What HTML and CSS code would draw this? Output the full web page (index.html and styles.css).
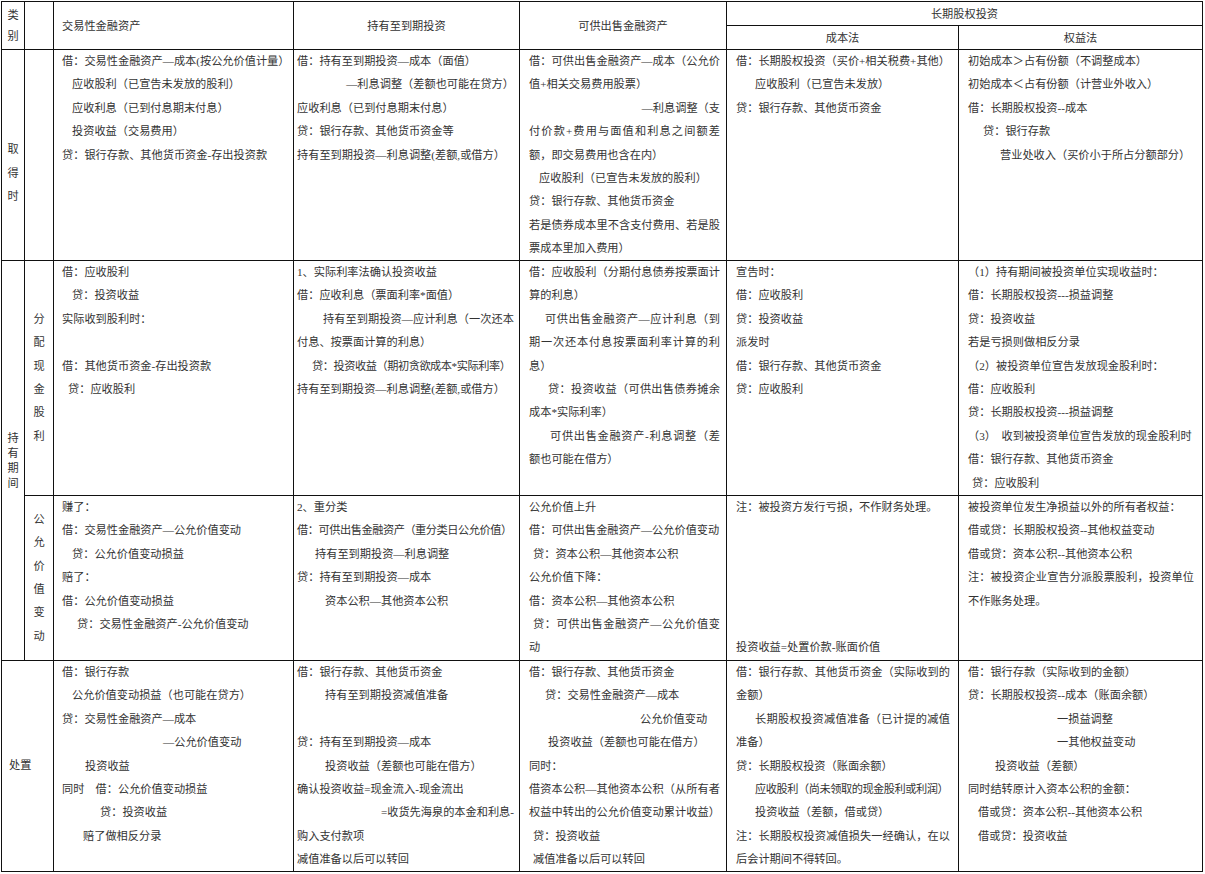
FILE: index.html
```html
<!DOCTYPE html>
<html lang="zh-CN">
<head>
<meta charset="utf-8">
<title>金融资产与长期股权投资会计处理</title>
<link rel="stylesheet" href="styles.css">
</head>
<body>
<div class="sheet">
  <!-- header -->
  <div class="cell hd rs2"><span class="stack st-kind">类别</span></div>
  <div class="cell rs2"></div>
  <div class="cell hd hd-left rs2">交易性金融资产</div>
  <div class="cell hd rs2">持有至到期投资</div>
  <div class="cell hd rs2">可供出售金融资产</div>
  <div class="cell hd cs2">长期股权投资</div>
  <div class="cell hd">成本法</div>
  <div class="cell hd">权益法</div>

  <!-- 取得时 -->
  <div class="cell side side-get"><span class="stack">取得时</span></div>
  <div class="cell"></div>
  <div class="cell k3">
    <p>借：交易性金融资产—成本(按公允价值计量）</p>
    <p class="p10">应收股利（已宣告未发放的股利）</p>
    <p class="p10">应收利息（已到付息期末付息）</p>
    <p class="p10">投资收益（交易费用）</p>
    <p>贷：银行存款、其他货币资金-存出投资款</p>
  </div>
  <div class="cell k4">
    <p>借：持有至到期投资—成本（面值）</p>
    <p class="r">—利息调整（差额也可能在贷方）</p>
    <p>应收利息（已到付息期末付息）</p>
    <p>贷：银行存款、其他货币资金等</p>
    <p>持有至到期投资—利息调整(差额,或借方）</p>
  </div>
  <div class="cell k5">
    <p class="j">借：可供出售金融资产—成本（公允价</p>
    <p>值+相关交易费用股票）</p>
    <p class="r">—利息调整（支</p>
    <p class="j">付价款+费用与面值和利息之间额差</p>
    <p>额，即交易费用也含在内）</p>
    <p class="p10">应收股利（已宣告未发放的股利）</p>
    <p>贷：银行存款、其他货币资金</p>
    <p class="j">若是债券成本里不含支付费用、若是股</p>
    <p>票成本里加入费用）</p>
  </div>
  <div class="cell k6">
    <p>借：长期股权投资（买价+相关税费+其他）</p>
    <p class="p19">应收股利（已宣告未发放）</p>
    <p>贷：银行存款、其他货币资金</p>
  </div>
  <div class="cell k7">
    <p>初始成本＞占有份额（不调整成本）</p>
    <p>初始成本＜占有份额（计营业外收入）</p>
    <p>借：长期股权投资--成本</p>
    <p class="p15">贷：银行存款</p>
    <p class="p32">营业处收入（买价小于所占分额部分）</p>
  </div>

  <!-- 持有期间 -->
  <div class="cell side rs2"><span class="stack st-hold">持有期间</span></div>
  <div class="cell side"><span class="stack">分配现金股利</span></div>
  <div class="cell k3">
    <p>借：应收股利</p>
    <p class="p10">贷：投资收益</p>
    <p>实际收到股利时：</p>
    <p class="blank"></p>
    <p>借：其他货币资金-存出投资款</p>
    <p class="p6">贷：应收股利</p>
  </div>
  <div class="cell k4">
    <p>1、实际利率法确认投资收益</p>
    <p>借：应收利息（票面利率*面值）</p>
    <p class="p26 j">持有至到期投资—应计利息（一次还本</p>
    <p>付息、按票面计算的利息）</p>
    <p class="p15 tight">贷：投资收益（期初贪欲成本*实际利率）</p>
    <p>持有至到期投资—利息调整(差额,或借方）</p>
  </div>
  <div class="cell k5">
    <p class="j">借：应收股利（分期付息债券按票面计</p>
    <p>算的利息）</p>
    <p class="p16 j">可供出售金融资产—应计利息（到</p>
    <p class="j">期一次还本付息按票面利率计算的利</p>
    <p>息）</p>
    <p class="p19 j">贷：投资收益（可供出售债券摊余</p>
    <p>成本*实际利率）</p>
    <p class="p21 j">可供出售金融资产-利息调整（差</p>
    <p>额也可能在借方）</p>
  </div>
  <div class="cell k6">
    <p>宣告时：</p>
    <p>借：应收股利</p>
    <p>贷：投资收益</p>
    <p>派发时</p>
    <p>借：银行存款、其他货币资金</p>
    <p>贷：应收股利</p>
  </div>
  <div class="cell k7">
    <p>（1）持有期间被投资单位实现收益时：</p>
    <p>借：长期股权投资---损益调整</p>
    <p>贷：投资收益</p>
    <p>若是亏损则做相反分录</p>
    <p>（2）被投资单位宣告发放现金股利时：</p>
    <p>借：应收股利</p>
    <p>贷：长期股权投资---损益调整</p>
    <p>（3）　收到被投资单位宣告发放的现金股利时</p>
    <p>借：银行存款、其他货币资金</p>
    <p class="p4">贷：应收股利</p>
  </div>

  <div class="cell side"><span class="stack">公允价值变动</span></div>
  <div class="cell k3">
    <p>赚了：</p>
    <p>借：交易性金融资产—公允价值变动</p>
    <p class="p10">贷：公允价值变动损益</p>
    <p>赔了：</p>
    <p>借：公允价值变动损益</p>
    <p class="p15">贷：交易性金融资产-公允价值变动</p>
  </div>
  <div class="cell k4">
    <p>2、重分类</p>
    <p class="tight">借：可供出售金融资产（重分类日公允价值）</p>
    <p class="p18">持有至到期投资—利息调整</p>
    <p>贷：持有至到期投资—成本</p>
    <p class="p28">资本公积—其他资本公积</p>
  </div>
  <div class="cell k5">
    <p>公允价值上升</p>
    <p>借：可供出售金融资产—公允价值变动</p>
    <p class="p4">贷：资本公积—其他资本公积</p>
    <p>公允价值下降：</p>
    <p>借：资本公积—其他资本公积</p>
    <p class="p4 j">贷：可供出售金融资产—公允价值变</p>
    <p>动</p>
  </div>
  <div class="cell k6">
    <p>注：被投资方发行亏损，不作财务处理。</p>
    <p class="blank"></p>
    <p class="blank"></p>
    <p class="blank"></p>
    <p class="blank"></p>
    <p class="blank"></p>
    <p>投资收益=处置价款-账面价值</p>
  </div>
  <div class="cell k7">
    <p>被投资单位发生净损益以外的所有者权益：</p>
    <p>借或贷：长期股权投资--其他权益变动</p>
    <p>借或贷：资本公积--其他资本公积</p>
    <p class="j">注：被投资企业宣告分派股票股利，投资单位</p>
    <p>不作账务处理。</p>
  </div>

  <!-- 处置 -->
  <div class="cell label-row cs2">处置</div>
  <div class="cell k3">
    <p>借：银行存款</p>
    <p class="p10">公允价值变动损益（也可能在贷方）</p>
    <p>贷：交易性金融资产—成本</p>
    <p class="p101">—公允价值变动</p>
    <p class="p23">投资收益</p>
    <p>同时　借：公允价值变动损益</p>
    <p class="p38">贷：投资收益</p>
    <p class="p21">赔了做相反分录</p>
  </div>
  <div class="cell k4">
    <p>借：银行存款、其他货币资金</p>
    <p class="p28">持有至到期投资减值准备</p>
    <p class="blank"></p>
    <p>贷：持有至到期投资—成本</p>
    <p class="p28">投资收益（差额也可能在借方）</p>
    <p>确认投资收益=现金流入-现金流出</p>
    <p class="r">=收货先海泉的本金和利息-</p>
    <p>购入支付款项</p>
    <p>减值准备以后可以转回</p>
  </div>
  <div class="cell k5">
    <p>借：银行存款、其他货币资金</p>
    <p class="p16">贷：交易性金融资产—成本</p>
    <p class="p111">公允价值变动</p>
    <p class="p19">投资收益（差额也可能在借方）</p>
    <p>同时：</p>
    <p class="j">借资本公积—其他资本公积（从所有者</p>
    <p class="j">权益中转出的公允价值变动累计收益）</p>
    <p class="p4">贷：投资收益</p>
    <p class="p4">减值准备以后可以转回</p>
  </div>
  <div class="cell k6">
    <p class="j">借：银行存款、其他货币资金（实际收到的</p>
    <p>金额）</p>
    <p class="p19 j">长期股权投资减值准备（已计提的减值</p>
    <p>准备）</p>
    <p>贷：长期股权投资（账面余额）</p>
    <p class="p19 tight">应收股利（尚未领取的现金股利或利润）</p>
    <p class="p19">投资收益（差额，借或贷）</p>
    <p class="j">注：长期股权投资减值损失一经确认，在以</p>
    <p>后会计期间不得转回。</p>
  </div>
  <div class="cell k7">
    <p>借：银行存款（实际收到的金额）</p>
    <p>贷：长期股权投资--成本（账面余额）</p>
    <p class="p89">一损益调整</p>
    <p class="p89">一其他权益变动</p>
    <p class="p27">投资收益（差额）</p>
    <p>同时结转原计入资本公积的金额：</p>
    <p class="p10">借或贷：资本公积--其他资本公积</p>
    <p class="p10">借或贷：投资收益</p>
  </div>
</div>
</body>
</html>
```

FILE: styles.css
```css
* {
  box-sizing: border-box;
  margin: 0;
  padding: 0;
}

body {
  margin: 0;
  background: #ffffff;
}

.sheet {
  display: grid;
  grid-template-columns: 22px 28px 239px 225px 206px 231px 243px;
  grid-template-rows: 23px 23px 210px 234px 164px 210px;
  gap: 1px;
  padding: 1px;
  width: 1202px;
  margin: 1px 0 0 1px;
  background: #111111;
  font-family: "Liberation Serif", "Noto Sans CJK SC", serif;
  font-size: 11.2px;
  line-height: 23.4px;
  color: #333333;
}

.rs2 { grid-row: span 2; }
.cs2 { grid-column: span 2; }

.cell {
  background: #ffffff;
  min-width: 0;
  overflow: hidden;
}

.cell p {
  white-space: nowrap;
  height: 23.4px;
}

/* header cells */
.hd {
  display: flex;
  align-items: center;
  justify-content: center;
  line-height: 16px;
}
.hd-left {
  justify-content: flex-start;
  padding-left: 8px;
}

/* vertical labels */
.side {
  display: flex;
  flex-direction: column;
  align-items: center;
  justify-content: center;
}
.side-get { padding-top: 37px; }

.stack {
  display: block;
  width: 1.4em;
  text-align: center;
  white-space: normal;
  word-break: break-all;
}
.st-kind { line-height: 21px; }
.st-hold { line-height: 15px; }

.label-row {
  display: flex;
  align-items: center;
  padding-left: 7px;
}

/* column paddings */
.k3 { padding-left: 8px; padding-right: 3px; }
.k4 { padding-left: 3px; padding-right: 5px; }
.k5 { padding-left: 9px; padding-right: 6px; }
.k6 { padding-left: 9px; padding-right: 8px; }
.k7 { padding-left: 9px; padding-right: 8px; }

/* alignments */
.j {
  text-align: justify;
  text-align-last: justify;
}
.r { text-align: right; }
.tight { letter-spacing: -0.45px; }

/* indents */
.p4 { padding-left: 4px; }
.p6 { padding-left: 6px; }
.p10 { padding-left: 10px; }
.p15 { padding-left: 15px; }
.p16 { padding-left: 16px; }
.p18 { padding-left: 18px; }
.p19 { padding-left: 19px; }
.p21 { padding-left: 21px; }
.p23 { padding-left: 23px; }
.p26 { padding-left: 26px; }
.p27 { padding-left: 27px; }
.p28 { padding-left: 28px; }
.p32 { padding-left: 32px; }
.p38 { padding-left: 38px; }
.p89 { padding-left: 89px; }
.p101 { padding-left: 101px; }
.p111 { padding-left: 111px; }
```
